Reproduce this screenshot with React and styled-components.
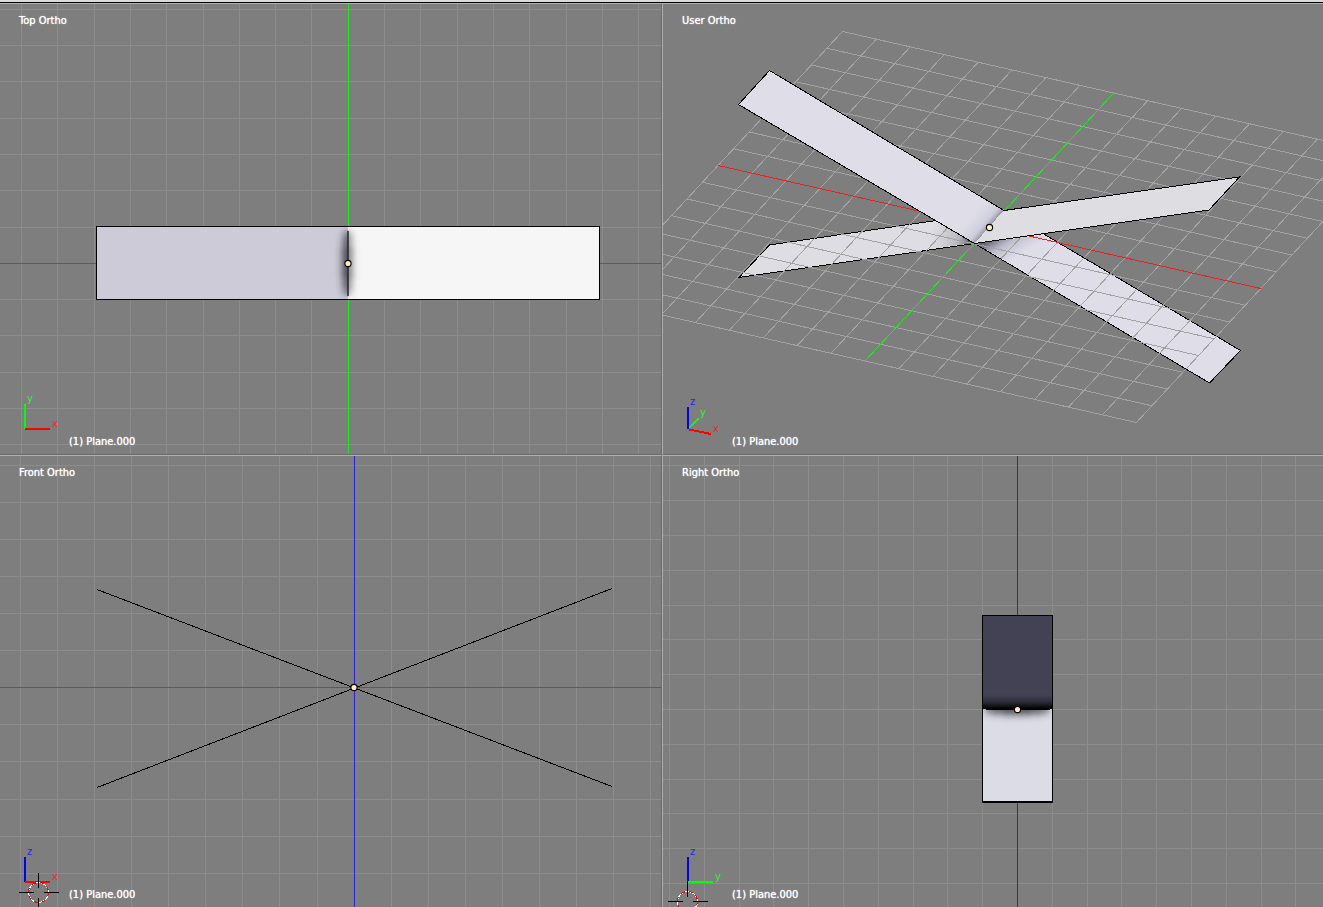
import React from 'react';
import styled, { createGlobalStyle } from 'styled-components';

const range = (from, to) => Array.from({ length: to - from + 1 }, (_, i) => from + i);

const Grid = ({ cx, cy, step, x, y, w, h }) => {
  const cols = range(Math.ceil((x - cx) / step), Math.floor((x + w - cx) / step));
  const rows = range(Math.ceil((y - cy) / step), Math.floor((y + h - cy) / step));
  return (
    <g>
      {cols.map((i) => (
        <rect key={`c${i}`} x={Math.floor(cx + i * step)} y={y} width="1" height={h} fill="#8d8d8d" />
      ))}
      {rows.map((i) => (
        <rect key={`r${i}`} x={x} y={Math.floor(cy + i * step)} width={w} height="1" fill="#8d8d8d" />
      ))}
    </g>
  );
};

const Origin = ({ x, y }) => (
  <circle
    cx={x + 0.5}
    cy={y + 0.5}
    r="3.1"
    fill="#ffefb5"
    stroke="#000"
    strokeWidth="1.1"
    shapeRendering="geometricPrecision"
  />
);

const Cursor = ({ x, y }) => (
  <g fill="none">
    <circle cx={x} cy={y} r="10" stroke="#fff" />
    <circle cx={x} cy={y} r="10" stroke="#f00" strokeDasharray="4 4" />
    <path
      d={`M${x - 20} ${y}h15M${x + 5} ${y}h15M${x} ${y - 20}v15M${x} ${y + 5}v15`}
      stroke="#000"
    />
  </g>
);

const TopScene = () => (
  <Scene viewBox="0 4 661 450" preserveAspectRatio="xMidYMid slice">
    <defs>
      <clipPath id="topLeft">
        <rect x="97" y="227" width="251" height="72" />
      </clipPath>
      <clipPath id="topRight">
        <rect x="348" y="227" width="251" height="72" />
      </clipPath>
      <filter id="topHaze" x="-400%" y="-20%" width="900%" height="140%">
        <feGaussianBlur stdDeviation="4 2" />
      </filter>
    </defs>
    <Grid cx={348.2} cy={263.3} step={36.3} x={0} y={4} w={661} h={450} />
    <rect x="0" y="263" width="661" height="1" fill="#dc2424" />
    <rect x="348" y="4" width="1" height="450" fill="#14ec14" />
    <rect x="96" y="226" width="504" height="74" fill="#000" />
    <rect x="97" y="227" width="251" height="72" fill="#cccbd7" />
    <rect x="348" y="227" width="251" height="72" fill="#f6f6f6" />
    <g clipPath="url(#topLeft)">
      <ellipse cx="348" cy="263" rx="5" ry="34" fill="#30303c" filter="url(#topHaze)" />
    </g>
    <g clipPath="url(#topRight)">
      <ellipse cx="347" cy="263" rx="4" ry="34" fill="#555" filter="url(#topHaze)" />
    </g>
    <rect x="347" y="231" width="2" height="65" fill="#26262c" opacity="0.75" />
    <Origin x={347.5} y={263} />
    <rect x="24" y="404" width="2" height="25" fill="#0f0" />
    <rect x="25" y="428" width="25" height="2" fill="#f00" />
    <AxisName x="27" y="402" fill="#2af52a">y</AxisName>
    <AxisName x="52" y="427" fill="#f22">x</AxisName>
  </Scene>
);

const FrontScene = () => (
  <Scene viewBox="0 456 661 451" preserveAspectRatio="xMidYMid slice">
    <Grid cx={354.1} cy={687.7} step={37.1} x={0} y={456} w={661} h={452} />
    <rect x="0" y="687" width="661" height="1" fill="#dc2424" />
    <rect x="354" y="456" width="1" height="452" fill="#2424dc" />
    <path d="M97 589.5L612 786.5M97 787.5L612 588.5" stroke="#000" fill="none" />
    <Origin x={353.5} y={687} />
    <rect x="24" y="857" width="2" height="25" fill="#00f" />
    <rect x="25" y="881" width="25" height="2" fill="#f00" />
    <AxisName x="27" y="855" fill="#22f">z</AxisName>
    <AxisName x="52" y="880" fill="#f22">x</AxisName>
    <Cursor x={38.5} y={892.5} />
  </Scene>
);

const RightScene = () => (
  <Scene viewBox="663 456 660 451" preserveAspectRatio="xMidYMid slice">
    <defs>
      <clipPath id="rightLower">
        <rect x="983" y="709" width="69" height="92" />
      </clipPath>
      <filter id="rightHaze" x="-20%" y="-400%" width="140%" height="900%">
        <feGaussianBlur stdDeviation="2 4" />
      </filter>
      <linearGradient id="foldUpper" x1="0" y1="0" x2="0" y2="1">
        <stop offset="0" stopColor="#000" stopOpacity="0" />
        <stop offset="0.5" stopColor="#000" stopOpacity="0.35" />
        <stop offset="1" stopColor="#000" />
      </linearGradient>
    </defs>
    <Grid cx={1017.5} cy={709.4} step={34.8} x={663} y={456} w={660} h={452} />
    <rect x="663" y="709" width="660" height="1" fill="#24dc24" />
    <rect x="1017" y="456" width="1" height="452" fill="#2424dc" />
    <rect x="982" y="615" width="71" height="188" fill="#000" />
    <rect x="983" y="616" width="69" height="93" fill="#434254" />
    <rect x="983" y="709" width="69" height="92" fill="#dcdce6" />
    <rect x="983" y="695" width="69" height="14" fill="url(#foldUpper)" />
    <g clipPath="url(#rightLower)">
      <ellipse cx="1017" cy="709" rx="34" ry="5" fill="#38383f" filter="url(#rightHaze)" />
    </g>
    <rect x="986" y="708" width="64" height="2" fill="#000" />
    <Origin x={1017} y={709} />
    <rect x="687" y="857" width="2" height="25" fill="#00f" />
    <rect x="688" y="881" width="25" height="2" fill="#0f0" />
    <AxisName x="690" y="855" fill="#22f">z</AxisName>
    <AxisName x="715" y="880" fill="#2af52a">y</AxisName>
    <Cursor x={687.5} y={901.5} />
  </Scene>
);

// floor plane: origin plus one cell along x and along y
const floor = (a, b) => `${989.4 + a * 33.92 + b * 15.55} ${227 + a * 7.69 - b * 16.75}`;

const UserScene = () => (
  <Scene viewBox="663 4 660 450" preserveAspectRatio="xMidYMid slice">
    <defs>
      <radialGradient id="shadeLeft" gradientUnits="userSpaceOnUse" cx="974" cy="243" r="44">
        <stop offset="0" stopColor="#26262c" stopOpacity="0.9" />
        <stop offset="0.35" stopColor="#55555c" stopOpacity="0.3" />
        <stop offset="1" stopColor="#88888e" stopOpacity="0" />
      </radialGradient>
      <linearGradient id="shadeRight" gradientUnits="userSpaceOnUse" x1="995" y1="238" x2="1010" y2="262">
        <stop offset="0" stopColor="#4c4c60" stopOpacity="0.8" />
        <stop offset="0.4" stopColor="#70708a" stopOpacity="0.3" />
        <stop offset="1" stopColor="#9090a4" stopOpacity="0" />
      </linearGradient>
      <linearGradient id="shadeUpper" gradientUnits="userSpaceOnUse" x1="974" y1="214" x2="989" y2="227">
        <stop offset="0" stopColor="#8080a0" stopOpacity="0" />
        <stop offset="0.7" stopColor="#707090" stopOpacity="0.14" />
        <stop offset="1" stopColor="#40405a" stopOpacity="0.45" />
      </linearGradient>
    </defs>
    <g stroke="#000" strokeLinejoin="round">
      <path d="M1004 210.5L769.5 245L739 277.5L974.5 243.5Z" fill="#dedde3" />
      <path d="M1004 210.5L1240.5 350.5L1209.5 383L974.5 243.5Z" fill="#dedde8" />
    </g>
    <path d="M1004 211L934 221L900 253L974.5 243Z" fill="url(#shadeLeft)" />
    <path d="M975 243.5L1043 235L1052 240L1012 264Z" fill="url(#shadeRight)" />
    <g stroke="#a2a2a2" fill="none">
      {range(-8, 8).map((i) => (
        <path key={i} d={`M${floor(-8, i)}L${floor(8, i)}M${floor(i, -8)}L${floor(i, 8)}`} />
      ))}
    </g>
    <path d={`M${floor(-8, 0)}L${floor(8, 0)}`} stroke="#eb2020" />
    <path d={`M${floor(0, -8)}L${floor(0, 8)}`} stroke="#20e620" />
    <path d="M769.5 70.5L1004 210.5L974.5 243.5L738.5 104.5Z" fill="#dedde8" />
    <path d="M1004 210.5L1239.5 177L1209 210L974.5 243.5Z" fill="#dedde2" />
    <path d="M1003.5 210.5L974.5 243.5L950 229L980 196Z" fill="url(#shadeUpper)" />
    <path
      d="M974.5 243.5L738.5 104.5L769.5 70.5L1004 210.5L1239.5 177L1209 210L974.5 243.5"
      stroke="#000"
      fill="none"
    />
    <Origin x={989} y={227} />
    <rect x="687" y="407" width="2" height="22" fill="#00f" />
    <path d="M689 428L698.5 418.5" stroke="#0f0" strokeWidth="2" />
    <path d="M689 429.5L711 434" stroke="#f00" strokeWidth="2" />
    <AxisName x="690" y="405" fill="#22f">z</AxisName>
    <AxisName x="700" y="416" fill="#2af52a">y</AxisName>
    <AxisName x="713" y="432" fill="#f22">x</AxisName>
  </Scene>
);

const App = () => (
  <Editor>
    <GlobalStyle />
    <HeaderEdge />
    <QuadView>
      <Viewport $left $upper>
        <TopScene />
        <ViewName>Top Ortho</ViewName>
        <ObjectName>(1) Plane.000</ObjectName>
      </Viewport>
      <Viewport $upper>
        <UserScene />
        <ViewName>User Ortho</ViewName>
        <ObjectName>(1) Plane.000</ObjectName>
      </Viewport>
      <Viewport $left>
        <FrontScene />
        <ViewName>Front Ortho</ViewName>
        <ObjectName>(1) Plane.000</ObjectName>
      </Viewport>
      <Viewport>
        <RightScene />
        <ViewName>Right Ortho</ViewName>
        <ObjectName>(1) Plane.000</ObjectName>
      </Viewport>
    </QuadView>
  </Editor>
);

const GlobalStyle = createGlobalStyle`
  body {
    margin: 0;
    background: #7e7e7e;
  }
`;

const Editor = styled.main`
  display: flex;
  flex-direction: column;
  height: 100vh;
  overflow: hidden;
  font-family: "DejaVu Sans Condensed", "DejaVu Sans", sans-serif;
  font-size: 11px;
  line-height: 14px;
  color: #fff;
`;

const HeaderEdge = styled.div`
  flex: none;
  height: 2px;
  background: #dadada;
  border-bottom: 1px solid #000;
`;

const QuadView = styled.div`
  flex: 1;
  min-height: 0;
  display: grid;
  grid-template-columns: round(up, 50%, 1px) 1fr;
  grid-template-rows: 1fr 1fr;
`;

const Viewport = styled.section`
  position: relative;
  box-sizing: border-box;
  min-width: 0;
  min-height: 0;
  overflow: hidden;
  display: flex;
  flex-direction: column;
  justify-content: space-between;
  align-items: flex-start;
  padding: 10px 19px 5px;
  background: #7e7e7e;
  border-top: 1px solid #b0b0b0;
  border-bottom: ${(props) => (props.$upper ? '1px solid #6a6a6a' : 'none')};
  ${(props) => (props.$left ? 'border-right: 1px solid #6a6a6a;' : 'border-left: 1px solid #b0b0b0;')}
`;

const Scene = styled.svg`
  position: absolute;
  inset: 0;
  width: 100%;
  height: 100%;
  shape-rendering: crispEdges;
`;

const AxisName = styled.text`
  font-size: 11px;
`;

const ViewName = styled.span`
  position: relative;
  text-shadow: 0 0 1px #fff;
`;

const ObjectName = styled(ViewName)`
  margin-left: 50px;
`;

export default App;
